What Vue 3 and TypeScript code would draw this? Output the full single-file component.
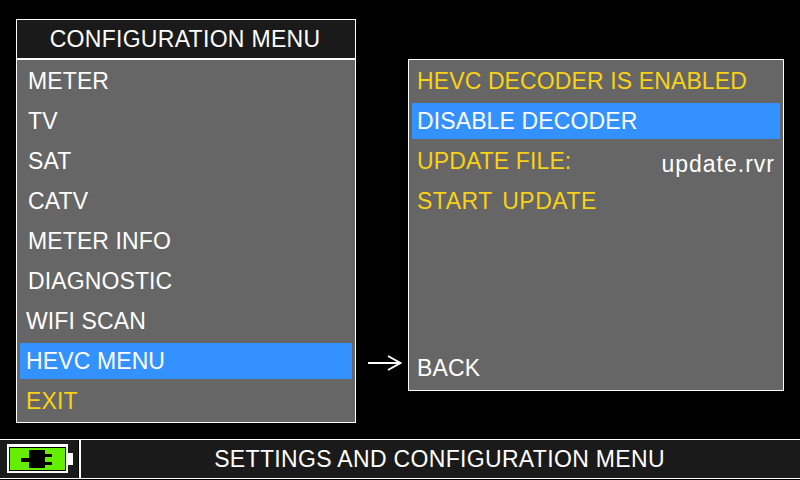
<template>
  <div class="screen">
    <div class="main">
      <!-- left menu -->
      <section class="panel cfg">
        <header class="cfg__title">CONFIGURATION MENU</header>
        <ul class="cfg__list">
          <li
            v-for="item in menu"
            :key="item.label"
            class="row"
            :class="{ 'row--sel': item.selected, 'row--warn': item.warn, 'row--tight': item.tight }"
          >
            {{ item.label }}
          </li>
        </ul>
      </section>

      <svg class="arrow" width="34" height="16" viewBox="0 0 34 16">
        <path d="M0 8H32M20 1 32.5 8 20 15" fill="none" stroke="#fff" stroke-width="2" />
      </svg>

      <!-- right submenu -->
      <section class="panel sub">
        <div class="row row--warn">HEVC DECODER IS ENABLED</div>
        <div class="row row--sel sub__sel">DISABLE DECODER</div>
        <div class="row row--warn sub__file">
          <span>UPDATE FILE:</span>
          <span class="sub__name">update.rvr</span>
        </div>
        <div class="row row--warn sub__start">START UPDATE</div>
        <div class="row sub__back">BACK</div>
      </section>
    </div>

    <footer class="status">
      <div class="status__batt">
        <svg width="78" height="38" viewBox="0 440 78 38">
          <rect x="7" y="444" width="61" height="29" fill="#fff" />
          <rect x="9" y="447" width="57" height="24" fill="#000" />
          <rect x="10" y="448" width="55" height="22" fill="#66ee00" />
          <rect x="68" y="453" width="5" height="12" fill="#fff" />
          <path d="M21 458h8v-8h16v4h7v3h-7v5h7v3h-7v3H29v-6h-8z" fill="#000" />
        </svg>
      </div>
      <div class="status__text">SETTINGS AND CONFIGURATION MENU</div>
    </footer>
  </div>
</template>

<script setup lang="ts">
interface MenuItem {
  label: string;
  selected?: boolean;
  warn?: boolean;
  tight?: boolean;
}

const menu: MenuItem[] = [
  { label: 'METER' },
  { label: 'TV' },
  { label: 'SAT' },
  { label: 'CATV' },
  { label: 'METER INFO' },
  { label: 'DIAGNOSTIC' },
  { label: 'WIFI SCAN', tight: true },
  { label: 'HEVC MENU', selected: true, tight: true },
  { label: 'EXIT', warn: true, tight: true },
];
</script>

<style>
html,
body {
  margin: 0;
  background: #000;
}
</style>

<style scoped>
.screen {
  width: 800px;
  height: 480px;
  background: #000;
  color: #fff;
  font-family: "Liberation Sans", Arial, sans-serif;
  font-size: 23px;
  letter-spacing: 0.12px;
  display: flex;
  flex-direction: column;
  overflow: hidden;
}

.main {
  height: 438px;
  padding: 19px 16px 0;
  box-sizing: border-box;
  display: flex;
  align-items: flex-start;
}

.panel {
  background: #666;
  border: 1px solid #fff;
  box-sizing: border-box;
}

/* ── Left menu ── */
.cfg {
  width: 340px;
  height: 404px;
}
.cfg__title {
  height: 40px;
  background: #1a1a1a;
  border-bottom: 2px solid #fff;
  box-sizing: border-box;
  text-align: center;
  line-height: 38px;
  letter-spacing: 0.3px;
  padding-right: 2px;
}
.cfg__list {
  list-style: none;
  margin: 0;
  padding: 3px 3px 0;
}

.row {
  height: 40px;
  line-height: 37px;
  padding-left: 8px;
}
.row--tight { padding-left: 6px; }
.row--warn { color: #fad215; }
.row--sel {
  height: 36px;
  line-height: 36px;
  margin: 0 0 4px;
  background: #3392ff;
  color: #fff;
}

/* ── Arrow ── */
.arrow {
  margin: 336px 6px 0 12px;
  flex-shrink: 0;
}

/* ── Right submenu ── */
.sub {
  width: 376px;
  height: 332px;
  margin-top: 40px;
  padding: 2px 3px 0;
  margin-left: auto;
  display: flex;
  flex-direction: column;
}
.sub .row {
  padding-left: 5px;
  line-height: 38px;
}
.sub .sub__sel {
  line-height: 37px;
  margin: 1px 0 3px;
  flex-shrink: 0;
}
.sub__file {
  display: flex;
  justify-content: space-between;
  padding-right: 5px;
}
.sub__name {
  color: #fff;
  padding-top: 3px;
  letter-spacing: 1px;
}
.sub__start {
  letter-spacing: 0.5px;
  word-spacing: 3px;
}
.sub__back {
  margin-top: auto;
  margin-bottom: 1px;
}

/* ── Status bar ── */
.status {
  height: 40px;
  margin-top: 1px;
  display: flex;
  background: #1a1a1a;
  border-top: 1px solid #fff;
  border-bottom: 1px solid #fff;
  box-sizing: border-box;
}
.status__batt {
  width: 81px;
  border-right: 2px solid #fff;
  background: linear-gradient(to right, #1a1a1a 78px, #000 78px);
  box-sizing: border-box;
  display: flex;
  align-items: center;
}
.status__text {
  flex: 1;
  text-align: center;
  line-height: 38px;
  letter-spacing: 0.33px;
  padding-right: 2px;
}
</style>
